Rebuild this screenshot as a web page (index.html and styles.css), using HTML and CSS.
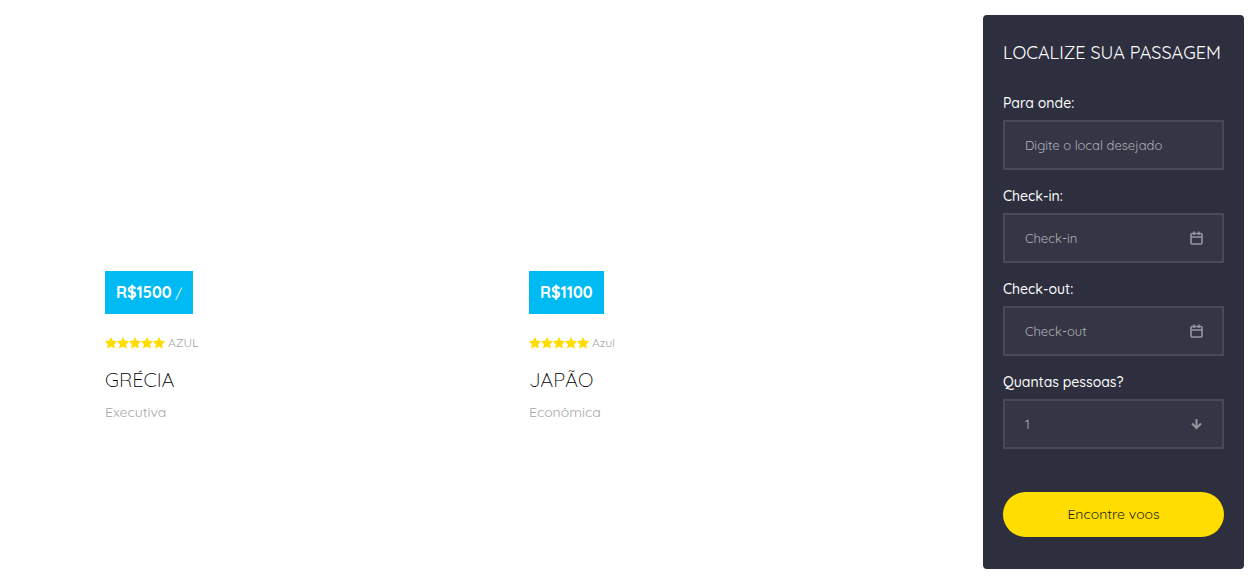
FILE: index.html
```html
<!DOCTYPE html>
<html lang="pt-BR">
<head>
<meta charset="utf-8">
<meta name="viewport" content="width=device-width, initial-scale=1">
<title>Passagens</title>
<link rel="stylesheet" href="styles.css">
</head>
<body>
<svg class="symbols" aria-hidden="true">
  <symbol id="stars" viewBox="0 0 60 12">
    <path id="star" d="M6 0 7.900 3.700 12.200 4.300 9.100 7.300 9.900 11.600 6 9.600 2.100 11.600 2.900 7.300 -0.200 4.300 4.100 3.700Z"/>
    <use href="#star" x="12"/><use href="#star" x="24"/><use href="#star" x="36"/><use href="#star" x="48"/>
  </symbol>
  <symbol id="calendar" viewBox="0 0 14 14">
    <path d="M2 2.500h9a1 1 0 0 1 1 1v8.500a1 1 0 0 1-1 1h-9a1 1 0 0 1-1-1V3.500a1 1 0 0 1 1-1ZM1 6h11M4 0.500v3.500M9 0.500v3.500" fill="none" stroke="currentColor" stroke-width="1.600"/>
  </symbol>
  <symbol id="arrow" viewBox="0 0 14 14">
    <path d="M6.500 2v9M2 6.500 6.500 11l4.500-4.500" fill="none" stroke="currentColor" stroke-width="2"/>
  </symbol>
</svg>
<div class="page">
  <main class="offers">
    <article class="offer">
      <div class="photo"></div>
      <p class="price"><strong class="amount">R$1500</strong> /</p>
      <p class="rating"><svg class="stars" role="img" aria-label="5 estrelas"><use href="#stars"/></svg>AZUL</p>
      <h3 class="place">GRÉCIA</h3>
      <p class="cabin">Executiva</p>
    </article>
    <article class="offer">
      <div class="photo"></div>
      <p class="price"><strong class="amount">R$1100</strong></p>
      <p class="rating"><svg class="stars" role="img" aria-label="5 estrelas"><use href="#stars"/></svg>Azul</p>
      <h3 class="place">JAPÃO</h3>
      <p class="cabin">Econômica</p>
    </article>
  </main>
  <aside class="search">
    <h2 class="search-title">LOCALIZE SUA PASSAGEM</h2>
    <form class="form">
      <div class="field">
        <label class="label" for="where">Para onde:</label>
        <div class="control"><input class="input" id="where" type="text" placeholder="Digite o local desejado"></div>
      </div>
      <div class="field">
        <label class="label" for="checkin">Check-in:</label>
        <div class="control"><input class="input" id="checkin" type="text" placeholder="Check-in"><svg class="icon" aria-hidden="true"><use href="#calendar"/></svg></div>
      </div>
      <div class="field">
        <label class="label" for="checkout">Check-out:</label>
        <div class="control"><input class="input" id="checkout" type="text" placeholder="Check-out"><svg class="icon" aria-hidden="true"><use href="#calendar"/></svg></div>
      </div>
      <div class="field">
        <label class="label" for="people">Quantas pessoas?</label>
        <div class="control"><select class="input" id="people"><option>1</option><option>2</option><option>3</option><option>4</option></select><svg class="icon" aria-hidden="true"><use href="#arrow"/></svg></div>
      </div>
      <button class="submit" type="submit">Encontre voos</button>
    </form>
  </aside>
</div>
</body>
</html>
```

FILE: styles.css
```css
* { box-sizing: border-box; }
body {
  margin: 0;
  background: #fff;
  color: #000;
  font-family: Quicksand, Lato, "Open Sans", sans-serif;
  font-size: 14px;
}
h2, h3, p { margin: 0; }
.symbols { position: absolute; width: 0; height: 0; }
.page {
  display: flex;
  align-items: flex-start;
  padding-right: 14px;
}
.offers {
  flex: 1;
  display: grid;
  grid-template-columns: 1fr 1fr;
  padding: 0 45px 0 90px;
}
.offer { padding: 0 15px; }
.photo { height: 271px; }
.price {
  width: fit-content;
  height: 43px;
  padding: 0 11px;
  background: #00bbf3;
  color: #fff;
  font-size: 13px;
  line-height: 42px;
}
.amount { font-size: 16px; }
.rating {
  display: flex;
  align-items: center;
  gap: 3px;
  margin-top: 19px;
  color: #a6a6a6;
  font-size: 12px;
  line-height: 20px;
}
.stars { width: 60px; height: 12px; fill: #ffdd00; }
.place {
  margin-top: 13px;
  font-size: 20px;
  font-weight: 300;
  line-height: 28px;
}
.cabin {
  margin-top: 8px;
  color: #a6a6a6;
  line-height: 20px;
}
.search {
  width: 261px;
  margin-top: 15px;
  padding: 26px 20px 32px;
  border-radius: 4px;
  background: #2d2e3e;
  color: #fff;
}
.search-title {
  margin-bottom: 27px;
  font-size: 18px;
  font-weight: 400;
  line-height: 24px;
  white-space: nowrap;
}
.form { display: flex; flex-direction: column; gap: 15px; }
.label {
  display: block;
  margin-bottom: 6px;
  font-weight: 500;
  line-height: 22px;
}
.control { position: relative; }
.input {
  display: block;
  width: 100%;
  height: 50px;
  margin: 0;
  padding: 0 20px;
  border: 2px solid #484959;
  border-radius: 0;
  background: #353645;
  color: #b0b0b7;
  font: inherit;
  font-size: 13px;
  appearance: none;
}
.input::placeholder { color: #b0b0b7; opacity: 1; }
.icon {
  position: absolute;
  top: 18px;
  right: 20px;
  width: 14px;
  height: 14px;
  color: #96969f;
  pointer-events: none;
}
.submit {
  height: 45px;
  margin-top: 28px;
  padding: 0 20px 2px;
  border: 0;
  border-radius: 23px;
  background: #ffdd00;
  color: #1d1e14;
  font: inherit;
}
```
